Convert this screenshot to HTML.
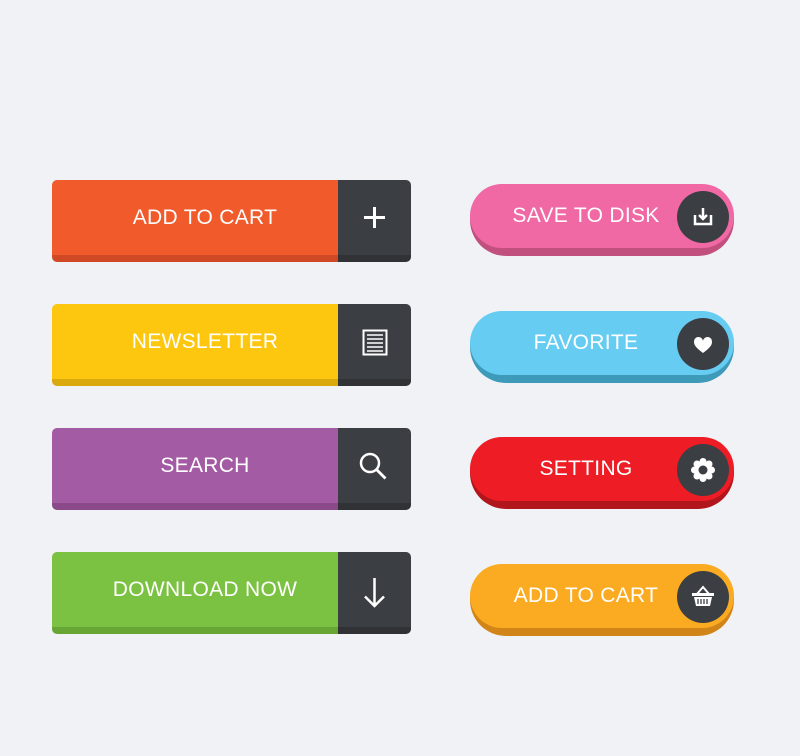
<!DOCTYPE html>
<html><head><style>
body{margin:0;width:800px;height:756px;background:#f0f2f6;position:relative;overflow:hidden;font-family:"Liberation Sans",sans-serif}
.lb{position:absolute;left:52px;width:359px;height:82px;border-radius:5px;overflow:hidden}
.lb .c{position:absolute;left:0;top:0;width:286px;height:75px;color:#fff;font-size:21px;line-height:75px;text-align:center;letter-spacing:.3px;box-sizing:border-box;padding-left:20px}
.lb .cs{position:absolute;left:0;top:75px;width:286px;height:7px}
.lb .d{position:absolute;left:286px;top:0;width:73px;height:75px;background:#3b3e43}
.lb .ds{position:absolute;left:286px;top:75px;width:73px;height:7px;background:#303236}
.lb svg{position:absolute;left:286px;top:0}
.pb{position:absolute;left:470px;width:264px;height:72px;border-radius:36px}
.pb .f{position:absolute;left:0;top:0;width:264px;height:64px;border-radius:32px;color:#fff;font-size:21px;line-height:64px;text-indent:-32px;text-align:center;letter-spacing:.3px}
.pb .ci{position:absolute;left:207px;top:7px;width:52px;height:52px;border-radius:50%;background:#3b3e43}
</style></head><body>

<div class="lb" style="top:180px"><div class="c" style="background:#f15a2b">ADD TO CART</div><div class="cs" style="background:#cf4a24"></div><div class="d"></div><div class="ds"></div>
<svg width="73" height="75"><path d="M36.5 27v21M26 37.5h21" stroke="#fff" stroke-width="3"/></svg></div>

<div class="lb" style="top:304px"><div class="c" style="background:#fdc70f">NEWSLETTER</div><div class="cs" style="background:#d9a90e"></div><div class="d"></div><div class="ds"></div>
<svg width="73" height="75"><rect x="25.5" y="26.5" width="23" height="24" fill="none" stroke="#fff" stroke-width="2"/><path d="M29 31h16M29 35h16M29 39h16M29 43h16M29 47h16" stroke="#fff" stroke-width="1.5"/></svg></div>

<div class="lb" style="top:428px"><div class="c" style="background:#a35ba3">SEARCH</div><div class="cs" style="background:#8a4a8a"></div><div class="d"></div><div class="ds"></div>
<svg width="73" height="75"><circle cx="32" cy="35" r="9" fill="none" stroke="#fff" stroke-width="2.5"/><path d="M38.5 41.5l9 9" stroke="#fff" stroke-width="2.8"/></svg></div>

<div class="lb" style="top:552px"><div class="c" style="background:#7cc242">DOWNLOAD NOW</div><div class="cs" style="background:#67a535"></div><div class="d"></div><div class="ds"></div>
<svg width="73" height="75"><path d="M36.5 26v28M27 44.5l9.5 9.5 9.5-9.5" fill="none" stroke="#fff" stroke-width="2.5"/></svg></div>

<div class="pb" style="top:184px;background:#c2507e"><div class="f" style="background:#f068a4">SAVE TO DISK</div><div class="ci"><svg width="52" height="52"><path d="M18 24v9h16v-9" fill="none" stroke="#fff" stroke-width="2.5"/><path d="M26 17v11M22 24l4 4 4-4" fill="none" stroke="#fff" stroke-width="2.5"/></svg></div></div>

<div class="pb" style="top:311px;background:#3d9ab9"><div class="f" style="background:#66ccf2">FAVORITE</div><div class="ci"><svg width="52" height="52"><path d="M26 35c-6-4.5-9-7.5-9-11a4.5 4.5 0 0 1 9-1a4.5 4.5 0 0 1 9 1c0 3.5-3 6.5-9 11z" fill="#fff"/></svg></div></div>

<div class="pb" style="top:437px;background:#b0161c"><div class="f" style="background:#ed1c25">SETTING</div><div class="ci"><svg width="52" height="52"><g fill="#fff"><circle cx="26" cy="26" r="9"/><circle cx="26" cy="17.5" r="3.5"/><circle cx="26" cy="34.5" r="3.5"/><circle cx="17.5" cy="26" r="3.5"/><circle cx="34.5" cy="26" r="3.5"/><circle cx="20" cy="20" r="3.5"/><circle cx="32" cy="20" r="3.5"/><circle cx="20" cy="32" r="3.5"/><circle cx="32" cy="32" r="3.5"/></g><circle cx="26" cy="26" r="4.5" fill="#3b3e43"/></svg></div></div>

<div class="pb" style="top:564px;background:#d18417"><div class="f" style="background:#fbab21">ADD TO CART</div><div class="ci"><svg width="52" height="52"><path d="M20 23l6-7 6 7" fill="none" stroke="#fff" stroke-width="2"/><rect x="15" y="22" width="22" height="3" fill="#fff"/><path d="M17 26h18l-2 9H19z" fill="#fff"/><path d="M21 28v5M24 28v5M27 28v5M30 28v5" stroke="#3b3e43" stroke-width="1.3"/></svg></div></div>

</body></html>
